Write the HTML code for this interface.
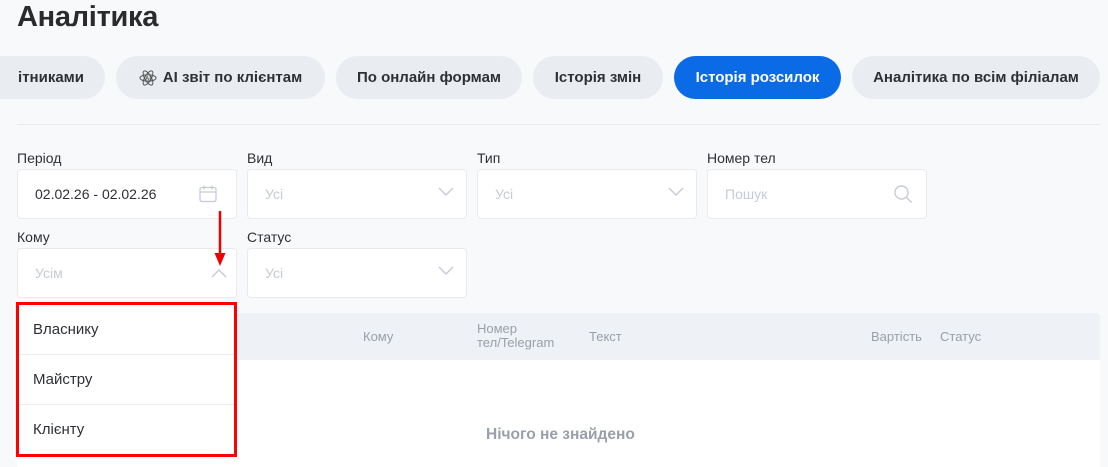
<!DOCTYPE html>
<html><head><meta charset="utf-8"><style>
*{box-sizing:border-box;margin:0;padding:0}
body{width:1108px;height:467px;overflow:hidden;background:#f8f9fa;font-family:"Liberation Sans",sans-serif;position:relative;color:#2a2d33}
.abs{position:absolute}
h1{position:absolute;left:17px;top:1px;font-size:29px;font-weight:bold;color:#2b2b2e;letter-spacing:-0.3px}
.chip{position:absolute;top:56px;height:43px;border-radius:22px;background:#e9ecf1;font-size:15px;font-weight:bold;color:#2e3035;display:flex;align-items:center;justify-content:center;white-space:nowrap;overflow:hidden}
.chip.act{background:#0b6be6;color:#fff}
.lbl{position:absolute;font-size:14px;color:#2e3035}
.box{position:absolute;width:220px;height:50px;background:#fff;border:1px solid #e8eaee;border-radius:4px;font-size:14px;color:#c5cbd6;padding:16px 0 0 17px}
.chev{position:absolute;right:12px;top:17px}
.th{position:absolute;font-size:13px;color:#9aa0aa;line-height:14px}
.dd{position:absolute;left:16px;top:302px;width:221px;height:155px;border:3px solid #f00;background:#fff}
.it{height:50px;border-bottom:1px solid #ececee;font-size:15px;color:#2e3035;padding:16px 0 0 14px}
</style></head><body>
<h1>Аналітика</h1>
<div class="chip" style="left:-30px;width:135px;justify-content:flex-end;padding-right:21px">ітниками</div>
<div class="chip" style="left:116px;width:209px"><svg width="18" height="18" viewBox="0 0 18 18" style="margin-right:6px" fill="none" stroke="#555" stroke-width="1"><ellipse cx="9" cy="9" rx="8" ry="3.2"/><ellipse cx="9" cy="9" rx="8" ry="3.2" transform="rotate(60 9 9)"/><ellipse cx="9" cy="9" rx="8" ry="3.2" transform="rotate(-60 9 9)"/><text x="9" y="11.5" font-size="6" text-anchor="middle" fill="#555" stroke="none" font-family="Liberation Sans">AI</text></svg>AI звіт по клієнтам</div>
<div class="chip" style="left:336px;width:186px">По онлайн формам</div>
<div class="chip" style="left:533px;width:130px">Історія змін</div>
<div class="chip act" style="left:674px;width:167px">Історія розсилок</div>
<div class="chip" style="left:852px;width:248px">Аналітика по всім філіалам</div>
<div class="abs" style="left:17px;top:124px;width:1083px;height:1px;background:#e6e9ee"></div>

<div class="lbl" style="left:17px;top:150px">Період</div>
<div class="lbl" style="left:247px;top:150px">Вид</div>
<div class="lbl" style="left:477px;top:150px">Тип</div>
<div class="lbl" style="left:707px;top:150px">Номер тел</div>
<div class="lbl" style="left:17px;top:229px">Кому</div>
<div class="lbl" style="left:247px;top:229px">Статус</div>

<div class="box" style="left:17px;top:169px;color:#2e3035">02.02.26 - 02.02.26<svg class="chev" style="right:18px;top:14px" width="20" height="20" viewBox="0 0 20 20" fill="none" stroke="#c5cbd6" stroke-width="1.3"><rect x="2" y="3.5" width="16" height="14" rx="2"/><path d="M2 8h16M6 1.5v4M14 1.5v4"/></svg></div>
<div class="box" style="left:247px;top:169px">Усі<svg class="chev" width="16" height="10" viewBox="0 0 16 10" fill="none" stroke="#c5cbd6" stroke-width="1.4"><path d="M1 1l7 7 7-7"/></svg></div>
<div class="box" style="left:477px;top:169px">Усі<svg class="chev" width="16" height="10" viewBox="0 0 16 10" fill="none" stroke="#c5cbd6" stroke-width="1.4"><path d="M1 1l7 7 7-7"/></svg></div>
<div class="box" style="left:707px;top:169px">Пошук<svg class="chev" style="right:13px;top:14px" width="20" height="20" viewBox="0 0 20 20" fill="none" stroke="#c5cbd6" stroke-width="1.4"><circle cx="8.5" cy="8.5" r="6.5"/><path d="M13.5 13.5l5 5"/></svg></div>
<div class="box" style="left:17px;top:248px">Усім<svg class="chev" style="top:19px;right:9px" width="16" height="10" viewBox="0 0 16 10" fill="none" stroke="#c5cbd6" stroke-width="1.4"><path d="M1 9l7-7 7 7"/></svg></div>
<div class="box" style="left:247px;top:248px">Усі<svg class="chev" width="16" height="10" viewBox="0 0 16 10" fill="none" stroke="#c5cbd6" stroke-width="1.4"><path d="M1 1l7 7 7-7"/></svg></div>

<svg class="abs" style="left:213px;top:211px" width="14" height="56" viewBox="0 0 14 56"><path d="M7 0v44" stroke="#e00" stroke-width="2.5"/><path d="M1.5 42h11L7 55z" fill="#e00"/></svg>

<div class="abs" style="left:17px;top:313px;width:1083px;height:47px;background:#eef1f5;border-radius:4px 4px 0 0"></div>
<div class="abs" style="left:17px;top:360px;width:1083px;height:107px;background:#fff"></div>
<div class="th" style="left:363px;top:330px">Кому</div>
<div class="th" style="left:477px;top:322px">Номер<br>тел/Telegram</div>
<div class="th" style="left:589px;top:330px">Текст</div>
<div class="th" style="left:871px;top:330px">Вартість</div>
<div class="th" style="left:940px;top:330px">Статус</div>
<div class="abs" style="left:486px;top:426px;font-size:15.5px;font-weight:bold;color:#9aa0aa">Нічого не знайдено</div>

<div class="dd"><div class="it">Власнику</div><div class="it">Майстру</div><div class="it" style="border:none">Клієнту</div></div>
</body></html>
